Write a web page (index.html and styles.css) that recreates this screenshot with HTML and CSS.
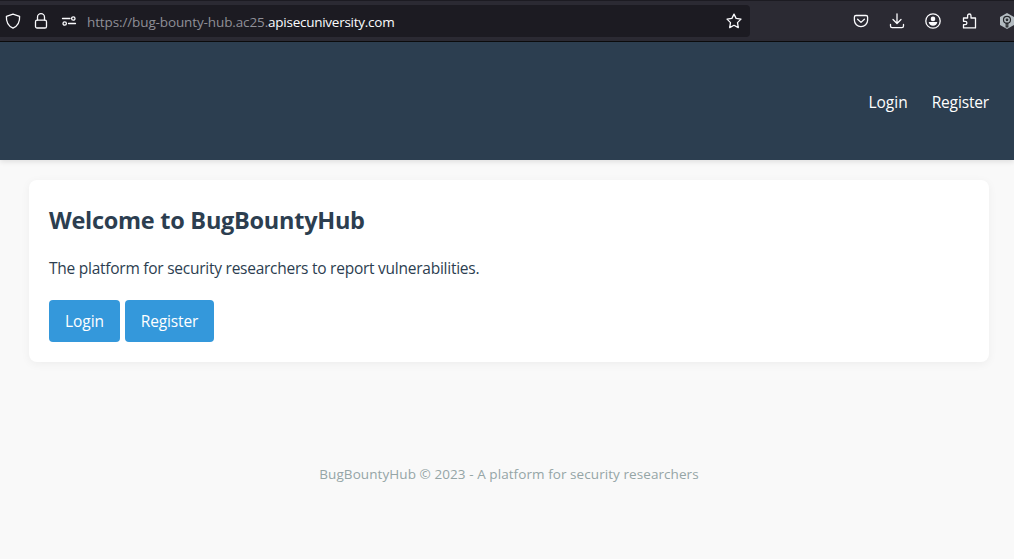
FILE: index.html
```html
<!DOCTYPE html>
<html lang="en">
<head>
<meta charset="utf-8">
<title>BugBountyHub</title>
<link rel="stylesheet" href="styles.css">
</head>
<body>
<div class="toolbar">
  <div class="address">
    <svg class="icon shield" viewBox="0 0 16 16"><path d="M8 1.200 14.600 3.400C14.900 8.500 13 13 8 15.200 3 13 1.100 8.500 1.400 3.400Z"/></svg>
    <svg class="icon lock" viewBox="0 0 16 16"><rect x="2.500" y="7.200" width="11" height="7.800" rx="1.600"/><path d="M4.500 7V4.200a3.500 3.500 0 0 1 7 0V7"/></svg>
    <svg class="icon permissions" viewBox="0 0 16 16"><path d="M1.500 5.500h7.500M7.500 10.500h7"/><circle cx="12.300" cy="5.500" r="1.700"/><circle cx="3.700" cy="10.500" r="1.700"/></svg>
    <span class="url">https://bug-bounty-hub.ac25.<b class="domain">apisecuniversity.com</b></span>
    <svg class="icon star" viewBox="0 0 16 16"><path d="M8 1.100 10.100 5.400 15 6.100 11.500 9.600 12.300 14.600 8 12.300 3.700 14.600 4.500 9.600 1 6.100 5.900 5.400Z"/></svg>
  </div>
  <div class="actions">
    <svg class="icon" viewBox="0 0 16 16"><path d="M3 2.500h10a1.600 1.600 0 0 1 1.600 1.600V7.300a6.600 6.300 0 0 1-13.200 0V4.100A1.600 1.600 0 0 1 3 2.500ZM4.600 6.200 8 9.400l3.400-3.200"/></svg>
    <svg class="icon" viewBox="0 0 16 16"><path d="M8 .8v9.400M4 6.500l4 4 4-4M1.500 11.500v1.600a1.600 1.600 0 0 0 1.600 1.600h9.800a1.600 1.600 0 0 0 1.600-1.600v-1.600"/></svg>
    <svg class="icon" viewBox="0 0 16 16"><circle cx="8" cy="8" r="7.200"/><circle class="fill" cx="8" cy="5.900" r="2.300"/><path class="fill" d="M3.700 9h8.600c-.2 2.200-2 3.700-4.300 3.700S3.900 11.200 3.700 9Z"/></svg>
    <svg class="icon" viewBox="0 0 16 16"><path d="M2.500 5H6.600V2.700a1.700 1.700 0 0 1 3.400 0V5h4.500v9.900H2.500v-3.200h1.700a1.700 1.700 0 0 0 0-3.400H2.500Z"/></svg>
    <svg class="icon extension" viewBox="0 0 16 16"><path class="hex" d="M8 0 15 4v8l-7 4-7-4V4Z"/><circle class="mark" cx="8" cy="6.800" r="3.500"/><circle class="mark" cx="8" cy="6.800" r=".8"/><path class="mark" d="M7.200 10v4h1.600v-4"/></svg>
  </div>
</div>
<header class="header">
  <nav class="nav"><a>Login</a><a class="tight">Register</a></nav>
</header>
<main class="card">
  <h2 class="title">Welcome to BugBountyHub</h2>
  <p class="intro">The platform for security researchers to report vulnerabilities.</p>
  <div class="buttons"><a class="button login">Login</a><a class="button register tight">Register</a></div>
</main>
<footer class="footer">BugBountyHub © 2023 - A platform for security researchers</footer>
</body>
</html>
```
FILE: styles.css
```css
* { box-sizing: border-box; }
body {
  margin: 0;
  height: 559px;
  overflow: hidden;
  background: #f9f9f9;
  color: #2c3e50;
  font: 15.5px/24px "Open Sans", "Noto Sans", sans-serif;
  white-space: nowrap;
}
.toolbar {
  display: flex;
  height: 42px;
  padding-top: 4px;
  background: #2b2a33;
  border-top: 1px solid #1c1b22;
  border-bottom: 1px solid #0c0c0d;
  overflow: hidden;
}
.address {
  display: flex;
  flex: none;
  align-items: center;
  width: 750px;
  height: 32px;
  padding: 0 8px 0 5px;
  background: #1c1b22;
  border-radius: 0 4px 4px 0;
}
.icon {
  flex: none;
  width: 16px;
  height: 16px;
  fill: none;
  stroke: #fbfbfe;
  stroke-width: 1.3;
  stroke-linecap: round;
  stroke-linejoin: round;
}
.lock { margin-left: 12px; }
.permissions { margin-left: 12px; }
.url {
  margin-left: 10px;
  padding-top: 2px;
  color: #8f8f97;
  font-size: 13.5px;
  letter-spacing: -.12px;
}
.domain {
  color: #fbfbfe;
  font-weight: 400;
  letter-spacing: -.26px;
}
.star { margin-left: auto; }
.actions {
  display: flex;
  flex: none;
  align-items: center;
  gap: 20px;
  height: 32px;
  margin-left: 103px;
}
.extension { margin-left: 2px; }
.fill { fill: #fbfbfe; stroke: none; }
.hex { fill: #b4bcc2; stroke: none; }
.mark { stroke: #25272b; stroke-width: 1.2; }
.header {
  display: flex;
  justify-content: flex-end;
  align-items: center;
  height: 118px;
  padding: 2px 25px 0 0;
  background: #2c3e50;
  color: #fff;
  box-shadow: 0 2px 5px rgba(0, 0, 0, .1);
}
.nav { display: flex; gap: 24px; }
.tight { letter-spacing: -.15px; }
.card {
  width: 960px;
  height: 182px;
  margin: 20px 0 0 29px;
  padding: 20px;
  background: #fff;
  border-radius: 8px;
  box-shadow: 0 2px 10px rgba(0, 0, 0, .05);
}
.title {
  margin: 0;
  font-size: 23.5px;
  line-height: 40px;
  letter-spacing: -.27px;
}
.intro { margin: 16px 0 20px; letter-spacing: -.25px; }
.buttons { display: flex; gap: 5px; }
.button {
  height: 42px;
  background: #3498db;
  border-radius: 4px;
  color: #fff;
  line-height: 42px;
  text-align: center;
}
.login { width: 71px; }
.register { width: 89px; }
.footer {
  margin: 100px 0 0 4px;
  color: #95a5a6;
  font-size: 13.5px;
  letter-spacing: .07px;
  text-align: center;
}
```
